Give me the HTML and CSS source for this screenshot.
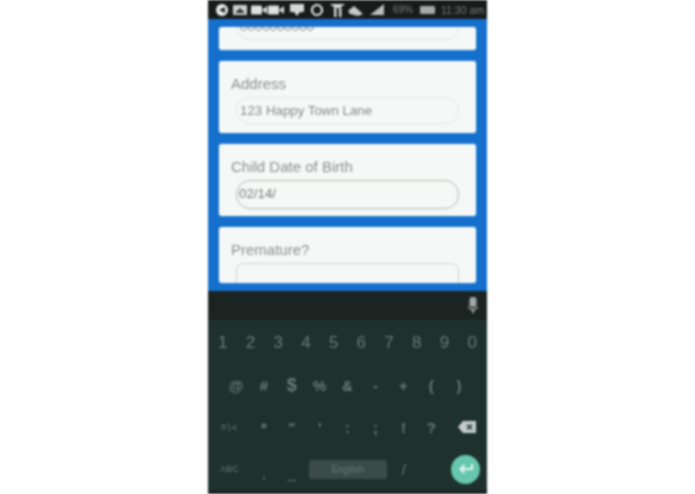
FILE: index.html
```html
<!DOCTYPE html>
<html lang="en">
<head>
  <meta charset="UTF-8">
  <title>Child Form</title>
  <link rel="stylesheet" href="styles.css">
</head>
<body>
  <div class="phone">
    <div class="status-bar">
      <svg class="status-icons" width="152" height="16" viewBox="0 0 152 16">
        <circle cx="8" cy="8" r="6" fill="#f0f0f0"/>
        <path d="M11 5 L5 8 L11 11 Z" fill="#222"/>
        <rect x="19" y="3" width="14" height="10" rx="1" fill="#cfcfcf"/>
        <path d="M21 11 L26 6 L31 11 Z" fill="#333"/>
        <rect x="37" y="3.500" width="11" height="9" rx="1" fill="#e0e0e0"/>
        <path d="M48 8 L53 4 V12 Z" fill="#e0e0e0"/>
        <rect x="54" y="3.500" width="11" height="9" rx="1" fill="#e0e0e0"/>
        <path d="M65 8 L70 4 V12 Z" fill="#e0e0e0"/>
        <path d="M76 2 H90 V10 H86 L83 14 L80 10 H76 Z" fill="#d8d8d8"/>
        <circle cx="103" cy="8" r="5" fill="none" stroke="#ececec" stroke-width="2.200"/>
        <path d="M116 2 H131 L126 6 H121 Z" fill="#d8d8d8"/>
        <rect x="120" y="6" width="2.500" height="9" fill="#d8d8d8"/>
        <rect x="125" y="6" width="2.500" height="9" fill="#d8d8d8"/>
        <path d="M134 9 L140 4 L149 12 L144 14 L136 12 Z" fill="#c8c8c8"/>
      </svg>
      <svg class="signal" width="14" height="13" viewBox="0 0 14 13">
        <path d="M0 12 L14 1 V12 Z" fill="#bcbcbc"/>
      </svg>
      <span class="status-text percent">69%</span>
      <span class="battery"></span>
      <span class="status-text clock">11:30 am</span>
    </div>

    <div class="form">
      <div class="card card-top">
        <div class="field"><span class="dots">0000000000</span></div>
      </div>
      <div class="card">
        <div class="card-label">Address</div>
        <div class="field">123 Happy Town Lane</div>
      </div>
      <div class="card">
        <div class="card-label">Child Date of Birth</div>
        <div class="field field-focus">02/14/</div>
      </div>
      <div class="card card-cut">
        <div class="card-label">Premature?</div>
        <div class="field field-cut"></div>
      </div>
    </div>

    <div class="suggest-bar">
      <svg width="12" height="17" viewBox="0 0 12 17">
        <rect x="2.500" y="0" width="7" height="10" rx="3" fill="#a4a9a7"/>
        <path d="M1 7 C1 13 11 13 11 7 V9 C11 13 7 13 7 13 V16 H5 V13 C5 13 1 13 1 9 Z" fill="#a4a9a7"/>
      </svg>
    </div>

    <div class="keyboard">
      <div class="key-row">
        <span>1</span><span>2</span><span>3</span><span>4</span><span>5</span>
        <span>6</span><span>7</span><span>8</span><span>9</span><span>0</span>
      </div>
      <div class="key-row row-symbols">
        <span>@</span><span>#</span><span class="big">$</span><span>%</span><span>&amp;</span>
        <span>-</span><span>+</span><span>(</span><span>)</span>
      </div>
      <div class="key-row row-third">
        <span class="small">=\&lt;</span><span>*</span><span>"</span><span>'</span><span>:</span>
        <span>;</span><span>!</span><span>?</span>
        <span class="backspace">
          <svg width="19" height="14" viewBox="0 0 19 14">
            <path d="M5 1 H18 V13 H5 L0 7 Z" fill="#c4cdca"/>
            <path d="M9 4.500 L14 9.500 M14 4.500 L9 9.500" stroke="#21332f" stroke-width="1.600"/>
          </svg>
        </span>
      </div>
      <div class="key-row row-bottom">
        <span class="small abc">ABC</span><span class="low">,</span><span class="low">_</span>
        <span class="space-key">English</span>
        <span>/</span>
        <span class="enter-key">
          <svg width="16" height="12" viewBox="0 0 16 12">
            <path d="M14 1 V6 H3 M6.500 2 L2.500 6 L6.500 10" fill="none" stroke="#e6f5f0" stroke-width="2"/>
          </svg>
        </span>
      </div>
    </div>
  </div>
</body>
</html>
```

FILE: styles.css
```css
html, body {
  margin: 0;
  height: 100%;
  background: #fff;
}
body {
  display: flex;
  justify-content: center;
  font-family: "Liberation Sans", Arial, sans-serif;
  overflow: hidden;
}
.phone {
  width: 279px;
  height: 494px;
  display: flex;
  flex-direction: column;
  filter: blur(1px);
}
.status-bar {
  height: 19px;
  flex: none;
  background: #181b1a;
  display: flex;
  align-items: center;
  padding-left: 6px;
  color: #7c7f7e;
  font-size: 10px;
}
.status-icons {
  flex: none;
}
.signal {
  flex: none;
  margin-left: 4px;
}
.status-text {
  white-space: nowrap;
}
.percent {
  margin-left: 9px;
}
.clock {
  margin-left: 6px;
  font-size: 10.500px;
}
.battery {
  width: 15px;
  height: 8px;
  flex: none;
  margin-left: 7px;
  background: #a8a8a8;
  border-radius: 1px;
}
.form {
  height: 272px;
  flex: none;
  background: #1470cc;
  padding: 8px 11px 0;
  box-sizing: border-box;
  overflow: hidden;
  display: flex;
  flex-direction: column;
  gap: 11px;
}
.card {
  flex: none;
  height: 72px;
  box-sizing: border-box;
  background: #f5f8f6;
  border-radius: 3px;
  padding: 14px 12px 0;
  overflow: hidden;
  box-shadow: 0 0 1px #bfe0ff;
}
.card-top {
  height: 23px;
  padding-top: 0;
}
.card-cut {
  height: 56px;
}
.card-label {
  font-size: 15px;
  line-height: 18px;
  color: #8f8f8f;
}
.field {
  height: 27px;
  box-sizing: border-box;
  margin: 4px 5px 0;
  padding-left: 3px;
  border: 1px solid #e3e5e2;
  border-radius: 13px;
  font-size: 13.300px;
  line-height: 25px;
  color: #8a8a8a;
  white-space: nowrap;
}
.card-top .field {
  margin-top: -14px;
}
.dots {
  display: block;
  line-height: 25px;
}
.field-focus {
  height: 29px;
  border: 1.500px solid #b4b6b2;
  border-radius: 14px;
  line-height: 26px;
  color: #777;
  padding-left: 2px;
}
.field-cut {
  border-radius: 8px 8px 0 0;
  border-color: #cfd1cd;
}
.suggest-bar {
  height: 29px;
  flex: none;
  background: #1b2421;
  display: flex;
  align-items: center;
  justify-content: flex-end;
  padding-right: 8px;
}
.keyboard {
  flex: 1;
  background: #1f312d;
  border-bottom: 4px solid #1b2421;
  box-sizing: border-box;
  padding-top: 2px;
  color: #687a75;
  font-size: 17px;
}
.key-row {
  height: 42px;
  display: grid;
  grid-template-columns: repeat(10, 1fr);
  padding: 0 1px;
  align-items: center;
  justify-items: center;
}
.row-symbols {
  grid-template-columns: repeat(9, 27.900px);
  padding: 0 14px;
  font-weight: bold;
  font-size: 15px;
}
.big {
  font-size: 18px;
}
.row-third {
  grid-template-columns: 41px repeat(7, 27.900px) 1fr;
  font-weight: bold;
  font-size: 15px;
  padding: 0 1px;
}
.small {
  font-size: 10px;
  font-weight: normal;
  letter-spacing: 1px;
}
.backspace {
  display: flex;
  margin-left: 4px;
}
.row-bottom {
  grid-template-columns: 41px 27.900px 27.900px 84px 27.900px 1fr;
  font-size: 15px;
}
.abc {
  font-size: 9px;
  letter-spacing: 0;
}
.low {
  margin-top: 6px;
}
.space-key {
  width: 78px;
  height: 19px;
  background: #3a4b47;
  border-radius: 2px;
  color: #677a75;
  font-size: 10px;
  line-height: 19px;
  text-align: center;
}
.enter-key {
  width: 29px;
  height: 29px;
  margin-left: 28px;
  border-radius: 50%;
  background: #66c7ae;
  display: flex;
  align-items: center;
  justify-content: center;
}
```
